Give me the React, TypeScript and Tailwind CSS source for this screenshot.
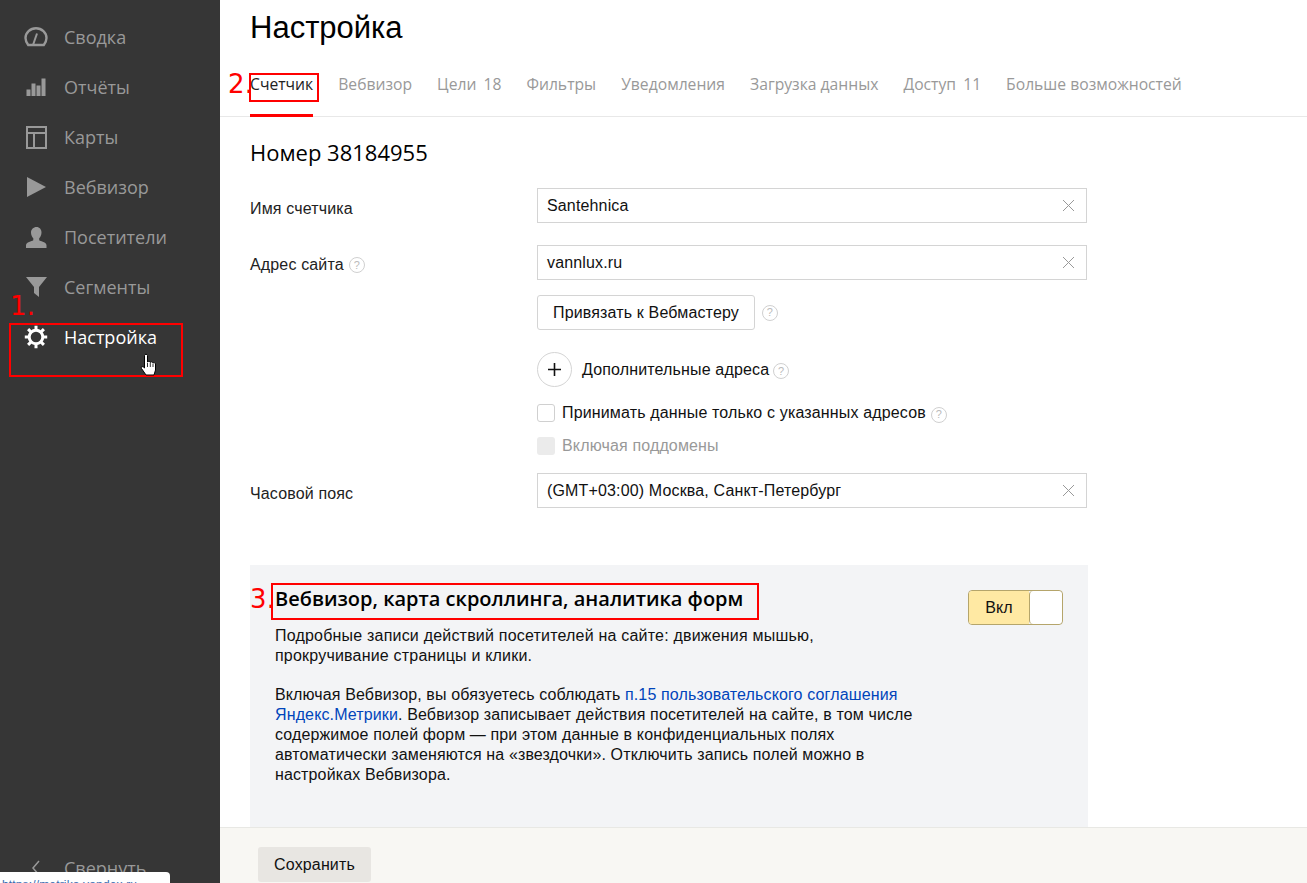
import React from "react";

const LS = "font-['Liberation_Sans',Arial,sans-serif]";

function Gauge() {
  return (
    <svg width="24" height="20" viewBox="0 0 24 20" fill="none" stroke="currentColor">
      <path d="M4.2 18h15.600c1.500-2 2.700-4.300 2.700-7a10.500 9.800 0 0 0-21 0c0 2.700 1.200 5 2.700 7z" strokeWidth="2.400" />
      <path d="M9 18l4-11.500" strokeWidth="2" />
    </svg>
  );
}

function Bars() {
  return (
    <svg width="20" height="18" viewBox="0 0 20 18" fill="currentColor">
      <rect x="0.500" y="11.500" width="4" height="6.500" />
      <rect x="5.500" y="5.500" width="4" height="12.500" />
      <rect x="10.500" y="7.500" width="4" height="10.500" />
      <rect x="15.500" y="0.500" width="4" height="17.500" />
    </svg>
  );
}

function MapIcon() {
  return (
    <svg width="21" height="23" viewBox="0 0 21 23" fill="none" stroke="currentColor" strokeWidth="2">
      <rect x="1" y="1" width="19" height="21" />
      <path d="M1 7h19M8 7v15" />
    </svg>
  );
}

function Play() {
  return (
    <svg width="20" height="20" viewBox="0 0 20 20" fill="currentColor">
      <path d="M1 0l19 10L1 20z" />
    </svg>
  );
}

function Person() {
  return (
    <svg width="21" height="21" viewBox="0 0 21 21" fill="currentColor">
      <path d="M10.500 0c3 0 5 2.400 5 5.500 0 2.500-1 4.500-2.300 5.800v2c1.500 1 7.300 2 7.300 5V21H0v-2.700c0-3 5.800-4 7.300-5v-2C6 10 5 8 5 5.500 5 2.400 7.500 0 10.500 0z" />
    </svg>
  );
}

function Funnel() {
  return (
    <svg width="21" height="20" viewBox="0 0 21 20" fill="currentColor">
      <path d="M0 0h21l-8 10v10l-5-4v-6z" />
    </svg>
  );
}

function Gear() {
  return (
    <svg width="24" height="24" viewBox="0 0 24 24" fill="none" stroke="currentColor">
      <circle cx="12" cy="12" r="6.800" strokeWidth="3" />
      <path d="M12 .8v4M12 19.200v4M.8 12h4M19.200 12h4M4.100 4.100l2.800 2.800M17.100 17.100l2.800 2.800M4.100 19.900l2.800-2.800M17.100 6.900l2.800-2.800" strokeWidth="3" />
    </svg>
  );
}

function Help() {
  return (
    <span className={`inline-flex h-[16px] w-[16px] shrink-0 items-center justify-center rounded-full border border-[#d0d0d0] text-[11px] leading-none text-[#bbb] ${LS}`}>
      ?
    </span>
  );
}

function ClearX() {
  return (
    <svg width="13" height="13" viewBox="0 0 13 13" stroke="#999" strokeWidth="1" fill="none" className="shrink-0">
      <path d="M1 1l11 11M12 1L1 12" />
    </svg>
  );
}

function TextField({ value }: { value: string }) {
  return (
    <div className="flex h-[35px] w-[550px] items-center justify-between border border-[#d4d4d4] bg-white pl-[9px] pr-[11px] text-[#111]">
      <span>{value}</span>
      <ClearX />
    </div>
  );
}

function RedBox({ className }: { className: string }) {
  return <div className={`pointer-events-none absolute border-2 border-[#f00] ${className}`} />;
}

function RedNum({ className, children }: { className: string; children: React.ReactNode }) {
  return <span className={`absolute text-[26px] leading-none text-[#f00] font-['DejaVu_Sans',sans-serif] ${className}`}>{children}</span>;
}

const navItems = [
  { label: "Сводка", icon: <Gauge /> },
  { label: "Отчёты", icon: <Bars /> },
  { label: "Карты", icon: <MapIcon /> },
  { label: "Вебвизор", icon: <Play /> },
  { label: "Посетители", icon: <Person /> },
  { label: "Сегменты", icon: <Funnel /> },
  { label: "Настройка", icon: <Gear />, active: true },
];

const tabs = ["Счетчик", "Вебвизор", "Цели 18", "Фильтры", "Уведомления", "Загрузка данных", "Доступ 11", "Больше возможностей"];

export default function App() {
  return (
    <div className={`relative flex h-[883px] w-[1307px] overflow-hidden bg-white text-[16px] tracking-[0.15px] ${LS}`}>
      {/* Sidebar */}
      <aside className="flex w-[220px] shrink-0 flex-col justify-between bg-[#363636] font-['Open_Sans',sans-serif] tracking-normal text-[#999]">
        <nav className="pt-[12px]">
          {navItems.map((item) => (
            <div key={item.label} className={`flex h-[50px] items-center ${item.active ? "text-white" : ""}`}>
              <span className="flex w-[64px] justify-center pl-[8px] pr-[0px]">
                <span className="flex w-[24px] justify-center">{item.icon}</span>
              </span>
              <span className="text-[18px]">{item.label}</span>
            </div>
          ))}
        </nav>
        <div className="flex h-[30px] items-center">
          <span className="flex w-[64px] justify-center pl-[8px]">
            <svg width="10" height="16" viewBox="0 0 10 16" fill="none" stroke="currentColor" strokeWidth="1.500">
              <path d="M8 1L2 8l6 7" />
            </svg>
          </span>
          <span className="text-[18px]">Свернуть</span>
        </div>
      </aside>

      {/* Main */}
      <main className="flex min-w-0 flex-1 flex-col">
        <div className="flex-1 overflow-hidden">
          <h1 className="pl-[30px] pt-[10px] text-[31px] leading-[36px] tracking-normal text-black">Настройка</h1>
          <div className="mt-[18px] flex h-[53px] gap-[25px] border-b border-[#e8e8e8] pl-[30px] font-['Open_Sans',sans-serif] text-[15.700px] tracking-normal text-[#999]">
            {tabs.map((tab, i) => (
              <div
                key={tab}
                className={`h-[53px] whitespace-nowrap pt-[9px] ${i === 0 ? "border-b-[3px] border-[#f00] text-[#222]" : ""} ${/\d/.test(tab) ? "[word-spacing:3px]" : ""}`}
              >
                {tab}
              </div>
            ))}
          </div>

          <div className="pl-[30px]">
            <h2 className="mt-[22px] font-['Open_Sans',sans-serif] text-[22px] leading-[27px] tracking-normal text-black">Номер 38184955</h2>

            <div className="mt-[22px] flex">
              <div className="w-[287px] pt-[9px] text-[#222]">Имя счетчика</div>
              <TextField value="Santehnica" />
            </div>

            <div className="mt-[22px] flex">
              <div className="flex h-[40px] w-[287px] items-center gap-[5px] text-[#222]">
                Адрес сайта <Help />
              </div>
              <div className="flex flex-col">
                <TextField value="vannlux.ru" />
                <div className="mt-[15px] flex items-center gap-[7px]">
                  <div className="flex h-[35px] w-[218px] items-center justify-center rounded-[3px] border border-[#d4d4d4] text-[#111]">
                    Привязать к Вебмастеру
                  </div>
                  <Help />
                </div>
                <div className="mt-[22px] flex items-center">
                  <div className="flex h-[35px] w-[35px] items-center justify-center rounded-full border border-[#d4d4d4]">
                    <svg width="15" height="15" viewBox="0 0 15 15" stroke="#111" strokeWidth="1.600">
                      <path d="M7.500 1v13M1 7.500h13" />
                    </svg>
                  </div>
                  <span className="ml-[10px] text-[#111]">Дополнительные адреса</span>
                  <span className="ml-[4px]"><Help /></span>
                </div>
                <div className="mt-[16px] flex h-[20px] items-center">
                  <span className="h-[18px] w-[18px] rounded-[3px] border border-[#d0d0d0] bg-white" />
                  <span className="ml-[7px] text-[#111]">Принимать данные только с указанных адресов</span>
                  <span className="ml-[5px]"><Help /></span>
                </div>
                <div className="mt-[13px] flex h-[20px] items-center">
                  <span className="h-[18px] w-[18px] rounded-[3px] bg-[#ebebeb]" />
                  <span className="ml-[7px] text-[#999]">Включая поддомены</span>
                </div>
              </div>
            </div>

            <div className="mt-[17px] flex">
              <div className="w-[287px] pt-[9px] text-[#222]">Часовой пояс</div>
              <TextField value="(GMT+03:00) Москва, Санкт-Петербург" />
            </div>

            {/* Webvisor */}
            <section className="mt-[57px] flex h-[300px] w-[838px] justify-between bg-[#f3f4f6] pl-[25px] pr-[25px] pt-[22px]">
              <div className="w-[680px] leading-[20px] tracking-[0.2px] text-[#111]">
                <h3 className="font-['Open_Sans',sans-serif] text-[20px] font-semibold leading-[24px] tracking-normal text-black">
                  Вебвизор, карта скроллинга, аналитика форм
                </h3>
                <p className="mt-[15px]">
                  Подробные записи действий посетителей на сайте: движения мышью,
                  <br />
                  прокручивание страницы и клики.
                </p>
                <p className="mt-[19px] tracking-[0.13px]">
                  Включая Вебвизор, вы обязуетесь соблюдать{" "}
                  <span className="text-[#04b]">п.15 пользовательского соглашения</span>
                  <br />
                  <span className="text-[#04b]">Яндекс.Метрики</span>. Вебвизор записывает действия посетителей на сайте, в том числе
                  <br />
                  содержимое полей форм — при этом данные в конфиденциальных полях
                  <br />
                  автоматически заменяются на «звездочки». Отключить запись полей можно в
                  <br />
                  настройках Вебвизора.
                </p>
              </div>
              <div className="mt-[3px] flex h-[35px] w-[95px] overflow-hidden rounded-[4px] border border-[#b5a56b] text-[#111]">
                <div className="flex w-[60px] items-center justify-center bg-[#ffe9a3]">Вкл</div>
                <div className="flex-1 rounded-[4px] border-l border-[#b5a56b] bg-white" />
              </div>
            </section>
          </div>
        </div>

        {/* Footer */}
        <footer className="flex h-[56px] shrink-0 items-start border-t border-[#e8e8e4] bg-[#f8f7f3] pl-[38px] pt-[19px]">
          <div className="flex h-[35px] w-[113px] items-center justify-center rounded-[3px] bg-[#e8e6e2] text-[#111]">Сохранить</div>
        </footer>
      </main>

      {/* Annotations */}
      <RedBox className="left-[9px] top-[323px] h-[54px] w-[174px]" />
      <RedBox className="left-[249px] top-[73px] h-[29px] w-[70px]" />
      <RedBox className="left-[271px] top-[583px] h-[37px] w-[488px]" />
      <RedNum className="left-[10px] top-[293px]">1.</RedNum>
      <RedNum className="left-[228px] top-[71px]">2.</RedNum>
      <RedNum className="left-[250px] top-[586px]">3.</RedNum>

      {/* Cursor */}
      <svg className="absolute left-[140px] top-[353px]" width="17" height="23" viewBox="0 0 17 23">
        <path d="M4.500 2.500C4.500.8 7.500.8 7.500 2.500V9C8 8 10 8 10.300 9.500 10.800 8.500 12.800 8.500 13 10c.5-.7 2.500-.5 2.500 1v6L14 22H6l-4.500-6.500C.5 14 2.500 12.500 4.500 15z" fill="#fff" stroke="#000" strokeWidth="1" />
        <path d="M7.500 10v4M10.300 10v4M13 10.500V14" stroke="#000" strokeWidth="0.800" fill="none" />
      </svg>

      {/* Browser status bubble */}
      <div className="absolute bottom-0 left-0 h-[11px] w-[170px] overflow-hidden rounded-tr-[4px] bg-white pl-[2px] pt-[5px] text-[12px] leading-[16px] text-[#3b6cb0]">
        https://metrika.yandex.ru
      </div>
    </div>
  );
}
